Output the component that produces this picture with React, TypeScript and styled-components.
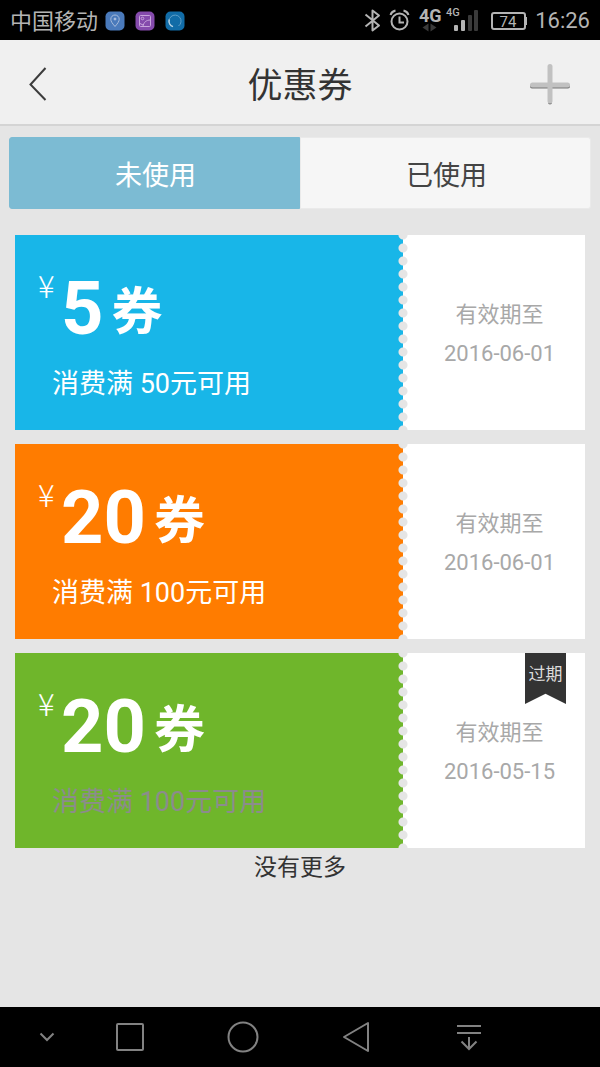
import React from "react";
import styled, { createGlobalStyle } from "styled-components";

const GlobalStyle = createGlobalStyle`
  * { box-sizing: border-box; }
  body {
    margin: 0;
    background: #e5e5e5;
    font-family: Roboto, "Noto Sans CJK SC", sans-serif;
  }
  button {
    margin: 0;
    padding: 0;
    border: 0;
    background: none;
    font: inherit;
    color: inherit;
    cursor: pointer;
  }
  svg { display: block; flex: none; }
`;

const Screen = styled.div`
  display: flex;
  flex-direction: column;
  min-height: 100vh;
`;

const StatusBar = styled.div`
  display: flex;
  align-items: center;
  height: 40px;
  padding: 2px 10px 0;
  background: #000;
  color: #b4b4b4;
  font-size: 22px;
  line-height: 40px;
`;

const Carrier = styled.span`
  margin-right: 7px;
  padding-top: 2px;
`;

const Notifications = styled.div`
  display: flex;
  gap: 10px;
  flex: 1;
`;

const StatusIcons = styled.div`
  display: flex;
  align-items: center;
`;

const Clock = styled.time`
  margin-left: 8px;
`;

const Header = styled.header`
  display: grid;
  grid-template-columns: 1fr auto 1fr;
  align-items: center;
  height: 86px;
  padding: 4px 28px 0;
  background: #f0f0f0;
  border-bottom: 2px solid #d4d4d4;
`;

const Title = styled.h1`
  margin: 0;
  padding-top: 6px;
  font-size: 35px;
  line-height: 48px;
  font-weight: 400;
  color: #333;
`;

const HeaderButton = styled.button<{ $end?: boolean }>`
  justify-self: ${(p) => (p.$end ? "end" : "start")};
`;

const Content = styled.main`
  flex: 1;
  padding: 11px 0 40px;
`;

const Tabs = styled.div`
  display: grid;
  grid-template-columns: 1fr 1fr;
  margin: 0 9px 26px;
`;

const Tab = styled.button<{ $active?: boolean }>`
  height: 72px;
  padding: 6px 0 0 2px;
  font-size: 27px;
  line-height: 36px;
  border: 1px solid ${(p) => (p.$active ? "#7cbbd3" : "#eaeaea")};
  border-radius: ${(p) => (p.$active ? "3px 0 0 3px" : "0 3px 3px 0")};
  background: ${(p) => (p.$active ? "#7cbbd3" : "#f6f6f6")};
  color: ${(p) => (p.$active ? "#fff" : "#444")};
`;

const CouponList = styled.ul`
  display: flex;
  flex-direction: column;
  gap: 14px;
  margin: 0;
  padding: 0 15px;
  list-style: none;
`;

const Coupon = styled.li`
  position: relative;
  display: grid;
  grid-template-columns: 1fr 10px 177px;
  height: 195px;
`;

const Face = styled.div<{ $color: string }>`
  padding: 36px 0 0 23px;
  background: ${(p) => p.$color};
  color: #fff;
`;

const Perforation = styled.div<{ $color: string }>`
  background:
    radial-gradient(circle at 50% 0, #e5e5e5 4px, transparent 5px) 0 0 / 10px 13px,
    radial-gradient(circle at 50% 100%, #e5e5e5 4px, transparent 5px) 0 0 / 10px 13px,
    linear-gradient(to right, ${(p) => p.$color} 50%, #fff 50%);
`;

const Amount = styled.div`
  display: flex;
  align-items: flex-start;
  height: 76px;
`;

const Currency = styled.span`
  width: 23px;
  font-family: "Noto Sans CJK SC", sans-serif;
  font-size: 31px;
  line-height: 28px;
  font-weight: 300;
`;

const Value = styled.span`
  font-size: 74px;
  line-height: 76px;
  font-weight: 700;
`;

const Unit = styled.span`
  margin-left: 8px;
  padding-top: 4px;
  font-size: 51px;
  line-height: 76px;
  font-weight: 700;
`;

const Condition = styled.p<{ $muted?: boolean }>`
  margin: 19px 0 0 14px;
  font-size: 27px;
  line-height: 36px;
  color: ${(p) => (p.$muted ? "#8c8c8c" : "#fff")};
`;

const Validity = styled.div`
  display: flex;
  flex-direction: column;
  align-items: center;
  justify-content: center;
  padding: 3px 0 0 6px;
  background: #fff;
  color: #a8a8a8;
  font-size: 22px;
  line-height: 39px;
`;

const Ribbon = styled.span`
  position: absolute;
  top: 0;
  right: 19px;
  width: 41px;
  height: 51px;
  background: #333;
  color: #dcdcdc;
  font-size: 17px;
  line-height: 42px;
  text-align: center;
  clip-path: polygon(0 0, 100% 0, 100% 100%, 50% 80%, 0 100%);
`;

const EndNote = styled.p`
  margin: 0;
  padding-top: 2px;
  text-align: center;
  font-size: 23px;
  line-height: 36px;
  color: #333;
`;

const NavBar = styled.nav`
  display: grid;
  grid-template-columns: 53fr repeat(4, 113fr) 75fr;
  height: 60px;
  padding-left: 20px;
  background: #000;
`;

const NavButton = styled.button`
  display: flex;
  align-items: center;
  justify-content: center;
  color: #828282;
`;

type CouponData = {
  value: string;
  condition: string;
  date: string;
  color: string;
  expired?: boolean;
};

const coupons: CouponData[] = [
  { value: "5", condition: "消费满 50元可用", date: "2016-06-01", color: "#18b6e8" },
  { value: "20", condition: "消费满 100元可用", date: "2016-06-01", color: "#ff7c00" },
  { value: "20", condition: "消费满 100元可用", date: "2016-05-15", color: "#6fb62b", expired: true },
];

function Status() {
  return (
    <StatusBar>
      <Carrier>中国移动</Carrier>
      <Notifications>
        <svg width="20" height="20" viewBox="0 0 20 20" fill="none" stroke="#a9bddc">
          <rect x="0.5" y="0.5" width="19" height="19" rx="5" fill="#4a7abb" stroke="none" />
          <path d="M10 15.5C7 12 5.800 10.300 5.800 8.200a4.200 4.200 0 0 1 8.400 0c0 2.100-1.200 3.800-4.200 7.300z" />
          <circle cx="10" cy="8" r="1" fill="#c4d2e8" />
        </svg>
        <svg width="20" height="20" viewBox="0 0 20 20" fill="none" stroke="#c8a4dc">
          <rect x="0.5" y="0.5" width="19" height="19" rx="5" fill="#854aac" stroke="none" />
          <rect x="4.5" y="4.5" width="11" height="11" rx="1" />
          <circle cx="7.5" cy="7.5" r="1.3" />
          <path d="M8 15.500C8.500 11.500 11 9 15.500 9M5 12.500l3 1.500" />
        </svg>
        <svg width="20" height="20" viewBox="0 0 20 20" fill="none">
          <rect x="0.5" y="0.5" width="19" height="19" rx="5" fill="#116ca7" />
          <path d="M13.500 15A6 6 0 1 0 6 14.500" stroke="#5d9fc8" />
          <path d="M4.200 8.500A6 6 0 0 0 8 15.600" stroke="#b5d2e4" strokeWidth="1.5" />
        </svg>
      </Notifications>
      <StatusIcons>
        <svg width="163" height="40" viewBox="364 1 163 40" fill="none" stroke="#b4b4b4" strokeWidth="2">
          <path d="M365.500 14.500L379 25.500l-6.500 5V10.500l6.500 5-13.500 11" strokeLinejoin="round" />
          <circle cx="399.500" cy="21.500" r="8" />
          <path d="M399.500 16.500V22.500h4.500M390.500 15q1-3.500 5-4.500M408.500 15q-1-3.500-5-4.500" />
          <g fill="#b4b4b4" stroke="none" fontFamily="Roboto, sans-serif">
            <text x="419" y="22" fontSize="18" fontWeight="700">4G</text>
            <text x="446" y="16" fontSize="11" fontWeight="500">4G</text>
            <rect x="454" y="25" width="4" height="6" rx="1" />
            <rect x="461" y="20" width="4" height="11" rx="1" />
            <text x="508" y="27" fontSize="15" textAnchor="middle">74</text>
            <rect x="525" y="17" width="2" height="8" />
          </g>
          <g fill="#3a3a3a" stroke="none">
            <path d="M428.500 23.500v8l-6-4zM430.500 23.500v8l6-4z" />
            <rect x="468" y="15" width="4" height="16" rx="1" />
            <rect x="474" y="10" width="4" height="21" rx="1" />
          </g>
          <rect x="492" y="13" width="33" height="16" rx="2" />
        </svg>
        <Clock>16:26</Clock>
      </StatusIcons>
    </StatusBar>
  );
}

export default function App() {
  return (
    <Screen lang="zh-CN">
      <GlobalStyle />
      <Status />
      <Header>
        <HeaderButton aria-label="返回">
          <svg width="20" height="36" viewBox="0 0 20 36" fill="none" stroke="#3c3c3c" strokeWidth="2">
            <path d="M17.500 2L2.500 18.500 17.500 34" />
          </svg>
        </HeaderButton>
        <Title>优惠券</Title>
        <HeaderButton $end aria-label="添加">
          <svg width="44" height="42" viewBox="0 0 44 42">
            <path d="M4 23.500h36M22 5v34.500" stroke="#777" strokeWidth="4" strokeLinecap="round" />
            <path d="M4.500 22h35M22 3.500v34.500" stroke="#c1c1c1" strokeWidth="5" strokeLinecap="round" />
          </svg>
        </HeaderButton>
      </Header>
      <Content>
        <Tabs role="tablist">
          <Tab role="tab" aria-selected="true" $active>未使用</Tab>
          <Tab role="tab" aria-selected="false">已使用</Tab>
        </Tabs>
        <CouponList>
          {coupons.map((c) => (
            <Coupon key={c.color}>
              <Face $color={c.color}>
                <Amount>
                  <Currency>¥</Currency>
                  <Value>{c.value}</Value>
                  <Unit>券</Unit>
                </Amount>
                <Condition $muted={c.expired}>{c.condition}</Condition>
              </Face>
              <Perforation $color={c.color} />
              <Validity>
                <span>有效期至</span>
                <time>{c.date}</time>
              </Validity>
              {c.expired && <Ribbon>过期</Ribbon>}
            </Coupon>
          ))}
        </CouponList>
        <EndNote>没有更多</EndNote>
      </Content>
      <NavBar>
        <NavButton aria-label="隐藏导航栏">
          <svg width="18" height="12" viewBox="0 0 18 12" fill="none" stroke="currentColor" strokeWidth="2">
            <path d="M2.500 2.500L9 9l6.500-6.500" />
          </svg>
        </NavButton>
        <NavButton aria-label="最近任务">
          <svg width="30" height="30" viewBox="0 0 30 30" fill="none" stroke="currentColor" strokeWidth="2">
            <rect x="2" y="2" width="26" height="26" rx="1" />
          </svg>
        </NavButton>
        <NavButton aria-label="主屏幕">
          <svg width="32" height="32" viewBox="0 0 32 32" fill="none" stroke="currentColor" strokeWidth="2">
            <circle cx="16" cy="16" r="14.500" />
          </svg>
        </NavButton>
        <NavButton aria-label="后退">
          <svg width="28" height="32" viewBox="0 0 28 32" fill="none" stroke="currentColor" strokeWidth="2" strokeLinejoin="round">
            <path d="M26 2v28L2 16z" />
          </svg>
        </NavButton>
        <NavButton aria-label="下拉通知栏">
          <svg width="26" height="28" viewBox="0 0 26 28" fill="none" stroke="currentColor" strokeWidth="2">
            <path d="M1 3h24M1 10h24M13 14v12M5.500 18.500L13 26l7.500-7.500" />
          </svg>
        </NavButton>
      </NavBar>
    </Screen>
  );
}
